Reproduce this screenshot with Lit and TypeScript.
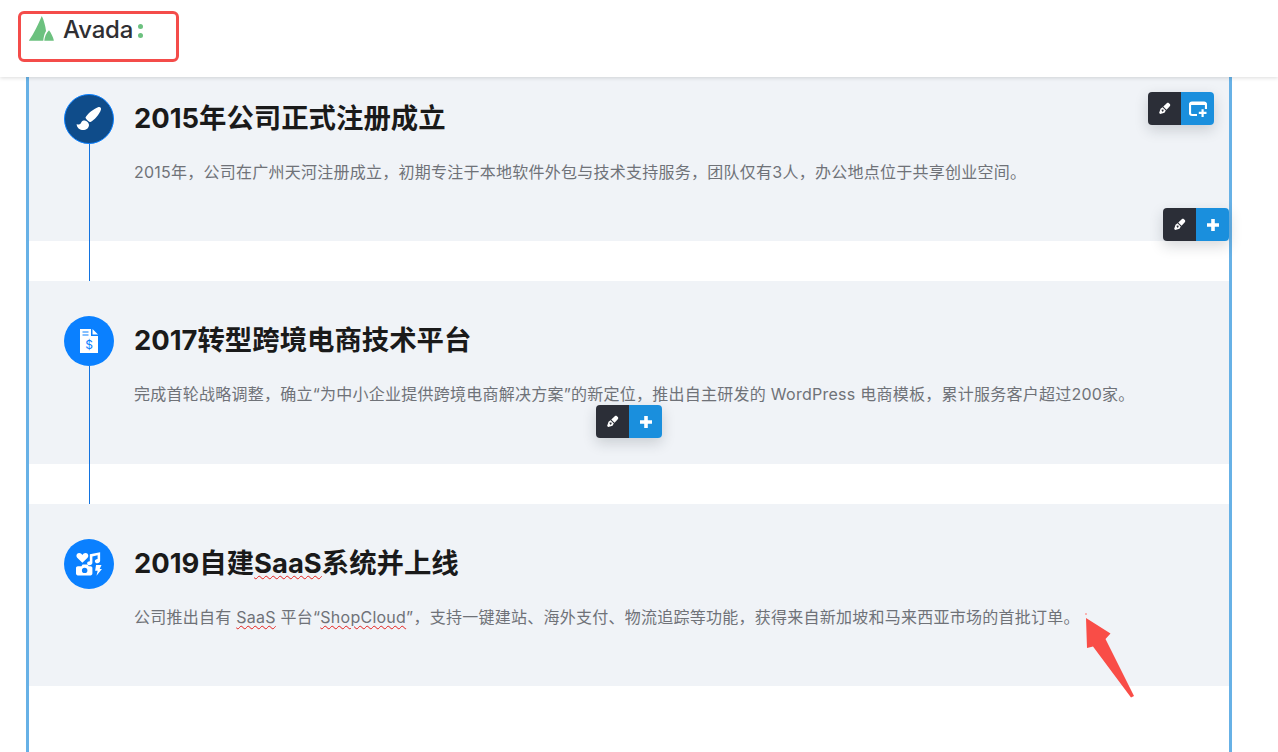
import { LitElement, html, css, svg } from "lit";
import { customElement } from "lit/decorators.js";

const pen = svg`<path d="M10.800 1.500c.8-.7 1.900-.7 2.700 0l1 1c.7.8.7 1.900 0 2.700l-4 4.300-4-4z" fill="#fff"/><path fill-rule="evenodd" d="M5.600 6.400l4 4-1.600 2.700-5.300 1.700-1.300-1.300 1.700-5.300zM5.700 9.200a1.200 1.200 0 1 0 .01 0z" fill="#fff"/>`;

const toolbar = (pos: string, kind: "plus" | "box") => html`
  <div class="tb ${pos}">
    <span class="d"><svg width="13" height="13" viewBox="0 0 16 16">${pen}</svg></span>
    <span class="b">
      ${kind === "plus"
        ? html`<svg width="12" height="12" viewBox="0 0 12 12"><path d="M4.200 0h3.600v4.200H12v3.600H7.800V12H4.200V7.800H0V4.200h4.200z" fill="#fff"/></svg>`
        : html`<svg width="18" height="16" viewBox="0 0 18 16"><path d="M8 14H3A2 2 0 0 1 1 12V3A2 2 0 0 1 3 1.500h12A2 2 0 0 1 17 3v5" fill="none" stroke="#fff" stroke-width="2.200"/><path d="M1.500 2.500h15" stroke="#fff" stroke-width="3"/><path d="M12.500 8.200h2.200v2.600H17.500v2.200h-2.800V16h-2.200v-3H9.800v-2.200h2.700z" fill="#fff"/></svg>`}
    </span>
  </div>`;

@customElement("app-root")
export class AppRoot extends LitElement {
  static styles = css`
    :host {
      display: block;
      position: relative;
      height: 752px;
      overflow: hidden;
      background: #fff;
      font-family: Inter, "Noto Sans CJK SC", sans-serif;
    }
    header {
      position: relative;
      z-index: 2;
      height: 77px;
      background: #fff;
      box-shadow: 0 1px 4px rgba(0, 0, 0, 0.14);
      padding: 14px 0 0 29px;
      box-sizing: border-box;
    }
    .logo {
      display: flex;
      align-items: flex-start;
      gap: 9px;
      color: #2f2f33;
      font-size: 24px;
      font-weight: 500;
      line-height: 32px;
      letter-spacing: -0.2px;
    }
    .logo svg {
      margin-top: 2px;
    }
    .colon {
      display: flex;
      flex-direction: column;
      gap: 4px;
      margin: 10px 0 0 -4px;
    }
    .colon i {
      width: 5px;
      height: 5px;
      border-radius: 50%;
      background: #6cc17f;
    }
    main {
      width: 1200px;
      height: 800px;
      margin: -19px 0 0 26px;
      border: solid #67b1e6;
      border-width: 0 3px;
      display: flex;
      flex-direction: column;
      gap: 40px;
    }
    .card {
      position: relative;
      height: 183px;
      flex: none;
      background: #f0f3f7;
      display: flex;
      gap: 20px;
      padding: 35px 0 0 35px;
      box-sizing: border-box;
    }
    .card.first {
      padding-top: 36px;
    }
    .card.last {
      height: 182px;
    }
    .track {
      position: relative;
      flex: none;
      width: 50px;
    }
    .dot {
      width: 50px;
      height: 50px;
      border-radius: 50%;
      background: #0a80ff;
      display: flex;
      align-items: center;
      justify-content: center;
      box-sizing: border-box;
    }
    .dot.dark {
      background: #0f4c8a;
      border: 1px solid #0a80ff;
    }
    .line {
      position: absolute;
      left: 25px;
      top: 50px;
      width: 1px;
      background: #1273e0;
    }
    .first .line {
      height: 137px;
    }
    .mid .line {
      height: 138px;
    }
    h2 {
      margin: 1px 0 0;
      font-size: 27.400px;
      line-height: 46px;
      font-weight: 700;
      color: #1a1a1a;
      white-space: nowrap;
    }
    p {
      margin: 19px 0 0;
      font-size: 16px;
      letter-spacing: 0.25px;
      line-height: 24px;
      color: #6f7278;
      white-space: nowrap;
    }
    .sp {
      text-decoration: underline wavy #e4201c 1px;
      text-underline-offset: 2px;
    }
    .tb {
      position: absolute;
      z-index: 1;
      display: flex;
      width: 66px;
      height: 33px;
      border-radius: 4px;
      overflow: hidden;
      box-shadow: 0 5px 14px rgba(30, 40, 50, 0.18);
    }
    .tb span {
      flex: 1;
      display: flex;
      align-items: center;
      justify-content: center;
    }
    .tb .d {
      background: #2b2e37;
    }
    .tb .b {
      background: #1a8fdd;
    }
    .t1 {
      top: 34px;
      left: 1119px;
    }
    .t2 {
      top: 150px;
      left: 1134px;
    }
    .t3 {
      top: 124px;
      left: 567px;
    }
    .redbox {
      position: absolute;
      z-index: 3;
      left: 18px;
      top: 11px;
      width: 161px;
      height: 51px;
      border: 3px solid #f44c4a;
      border-radius: 6px;
      box-sizing: border-box;
    }
    .arrow {
      position: absolute;
      z-index: 3;
      left: 1080px;
      top: 610px;
    }
  `;

  render() {
    return html`
      <header>
        <div class="logo">
          <svg width="25" height="25" viewBox="0 0 25 25">
            <path d="M12.800 0C14.800 4 16.500 10 17 15 15.300 18 14.500 21.500 14.300 24.700H.5C-.3 24.700 0 24 .6 23.500 4.500 18 9.500 8 12.800 0z" fill="#6cc17f"/>
            <path d="M20 14.200c2.200 3 4.200 6.700 4.800 10 .1.400-.2.500-.6.500H15.300c.2-3.700 2-8 4.700-10.500z" fill="#6cc17f"/>
          </svg>
          <span>Avada</span>
          <span class="colon"><i></i><i></i></span>
        </div>
      </header>
      <main>
        <section class="card first">
          <div class="track">
            <div class="dot dark">
              <svg width="30" height="30" viewBox="0 0 30 30">
                <path d="M24 3.200C26 2.400 27.400 3.600 27 5.500 25.500 10.500 20 16.500 16.500 18 15.500 18.400 11.500 15 11.500 13.500 13 10 20 4.500 24 3.200z" fill="#fff"/>
                <path d="M9.500 16.500C12 16 15 18.500 15 21 15 24.500 11.500 26.500 8 26 5 25.500 2.500 23 2.700 20 4.500 21 6 20.500 7 19 7.500 17.700 8.500 16.700 9.500 16.500z" fill="#fff"/>
              </svg>
            </div>
            <div class="line"></div>
          </div>
          <div>
            <h2>2015年公司正式注册成立</h2>
            <p>2015年，公司在广州天河注册成立，初期专注于本地软件外包与技术支持服务，团队仅有3人，办公地点位于共享创业空间。</p>
          </div>
          ${toolbar("t1", "box")}
          ${toolbar("t2", "plus")}
        </section>
        <section class="card mid">
          <div class="track">
            <div class="dot">
              <svg width="20" height="24" viewBox="0 0 20 24">
                <path d="M1 0h11v7h7v17H1z" fill="#fff"/>
                <path d="M13.500 0 19 5.500h-5.500z" fill="#fff"/>
                <path d="M3.500 3h6M3.500 6h6" stroke="#0a80ff" stroke-width="1.200"/>
                <text x="10" y="20" text-anchor="middle" font-family="Inter, sans-serif" font-size="12" fill="#0a80ff">$</text>
              </svg>
            </div>
            <div class="line"></div>
          </div>
          <div>
            <h2>2017转型跨境电商技术平台</h2>
            <p>完成首轮战略调整，确立“为中小企业提供跨境电商解决方案”的新定位，推出自主研发的 WordPress 电商模板，累计服务客户超过200家。</p>
          </div>
          ${toolbar("t3", "plus")}
        </section>
        <section class="card last">
          <div class="track">
            <div class="dot">
              <svg width="25.500" height="24" viewBox="0 0 28 26">
                <path d="M7 11.500 1.300 6C-.6 3.800 1 .8 3.500.8 5 .8 6.300 1.600 7 3c.7-1.400 2-2.200 3.500-2.200 2.500 0 4.100 3 2.200 5.200z" fill="#fff"/>
                <path d="M26.500 0v9.500c0 1.700-1.500 2.800-3 2.800s-2.800-1-2.800-2.300 1.300-2.400 3-2.400V3.500l-5.700 1.200v7c0 1.700-1.400 2.800-3 2.800s-2.800-1-2.800-2.300 1.300-2.300 3-2.300V2.200z" fill="#fff"/>
                <path d="M4 16h2l1.200-2h5.600l1.200 2h2c1 0 2 .9 2 2v6c0 1.100-.9 2-2 2H2c-1.100 0-2-.9-2-2v-6c0-1.100 1-2 2-2z" fill="#fff" transform="translate(0 -.5)"/>
                <circle cx="9.500" cy="20" r="3" fill="#0a80ff"/>
                <path d="M22 14h6l-2 4.500h2.500L22.500 26l1.300-5.500h-2.800z" fill="#fff"/>
              </svg>
            </div>
          </div>
          <div>
            <h2>2019自建<span class="sp">SaaS</span>系统并上线</h2>
            <p>公司推出自有 <span class="sp">SaaS</span> 平台“<span class="sp">ShopCloud</span>”，支持一键建站、海外支付、物流追踪等功能，获得来自新加坡和马来西亚市场的首批订单。</p>
          </div>
        </section>
      </main>
      <div class="redbox"></div>
      <svg class="arrow" width="60" height="92" viewBox="1080 610 60 92">
        <path d="M1086 618 1110.500 633.500 1105.500 639 1134 696 1131 697.500 1093 646.500 1087 648z" fill="#f94d47"/>
        <rect x="1085" y="613" width="2" height="2" fill="#f9b5b3"/>
      </svg>
    `;
  }
}
